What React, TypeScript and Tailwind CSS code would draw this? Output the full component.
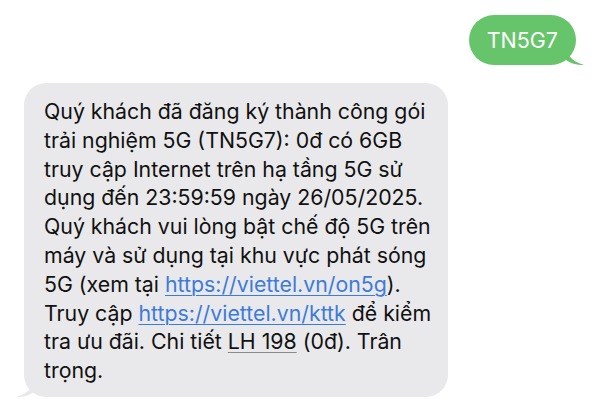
const lines: React.ReactNode[] = [
  "Quý khách đã đăng ký thành công gói",
  "trải nghiệm 5G (TN5G7): 0đ có 6GB",
  "truy cập Internet trên hạ tầng 5G sử",
  "dụng đến 23:59:59 ngày 26/05/2025.",
  "Quý khách vui lòng bật chế độ 5G trên",
  "máy và sử dụng tại khu vực phát sóng",
  <>
    5G (xem tại{" "}
    <span className="text-[#3d7bd9] underline decoration-1 underline-offset-[3px]">
      https://viettel.vn/on5g
    </span>
    ).
  </>,
  <>
    Truy cập{" "}
    <span className="text-[#3d7bd9] underline decoration-1 underline-offset-[3px]">
      https://viettel.vn/kttk
    </span>{" "}
    để kiểm
  </>,
  <>
    tra ưu đãi. Chi tiết{" "}
    <span className="underline decoration-1 decoration-[#8a8a8a] underline-offset-[3px]">LH 198</span> (0đ). Trân
  </>,
  "trọng.",
];

export default function App() {
  return (
    <div className="w-[600px] h-[400px] overflow-hidden bg-white font-['Inter','Liberation_Sans',sans-serif] flex flex-col">
      <div className="flex justify-end pt-[15px] pr-[24px]">
        <div className="relative h-[50px] px-[18px] rounded-[25px] bg-[#66c56a] flex items-center text-white text-[21.5px]">
          TN5G7
          <svg className="absolute -right-[8px] bottom-0" width="20" height="22" viewBox="0 0 20 22">
            <path d="M0 0 C2 10 6 18 20 22 C12 22 6 20 2 17 Z" fill="#66c56a" />
          </svg>
        </div>
      </div>
      <div className="pl-[24px] pt-[18px]">
        <div className="relative w-[424px] rounded-[22px] bg-[#e9e9eb] pl-[20px] pt-[14px] pb-[12px] text-[21.3px] leading-[28.8px] text-[#111]">
          {lines.map((l, i) => (
            <div key={i} className="whitespace-nowrap">
              {l}
            </div>
          ))}
          <svg className="absolute -left-[8px] bottom-0" width="20" height="22" viewBox="0 0 20 22">
            <path d="M20 0 C18 10 14 18 0 22 C8 22 14 20 18 17 Z" fill="#e9e9eb" />
          </svg>
        </div>
      </div>
    </div>
  );
}
